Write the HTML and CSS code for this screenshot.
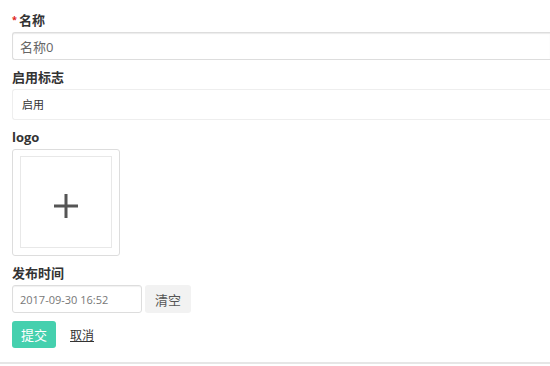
FILE: index.html
```html
<!DOCTYPE html>
<html lang="zh-CN">
<head>
    <meta charset="UTF-8">
    <meta name="viewport" content="width=device-width, initial-scale=1.0">
    <title>编辑</title>
    <link rel="stylesheet" href="styles.css">
</head>
<body>
    <form class="edit-form">
        <!-- 名称 -->
        <div class="field">
            <label class="field-label required">名称</label>
            <input type="text" class="text-input" value="名称0">
        </div>

        <!-- 启用标志 -->
        <div class="field">
            <label class="field-label">启用标志</label>
            <div class="select-box">启用</div>
        </div>

        <!-- logo -->
        <div class="field">
            <label class="field-label">logo</label>
            <div class="upload-box">
                <div class="upload-inner">
                    <svg width="26" height="26" viewBox="0 0 26 26">
                        <path d="M13 1v24M1 13h24" stroke="#555" stroke-width="3" fill="none"/>
                    </svg>
                </div>
            </div>
        </div>

        <!-- 发布时间 -->
        <div class="field">
            <label class="field-label">发布时间</label>
            <div class="date-row">
                <input type="text" class="date-input" value="2017-09-30 16:52">
                <button type="button" class="btn-clear">清空</button>
            </div>
        </div>

        <div class="actions">
            <button type="button" class="btn-submit">提交</button>
            <a href="#" class="link-cancel">取消</a>
        </div>
    </form>
</body>
</html>
```

FILE: styles.css
```css
body {
    margin: 0;
    padding: 0;
    background: #fff;
    color: #333;
    font-family: "Open Sans", "Noto Sans CJK SC", sans-serif;
}

.edit-form {
    width: 100%;
    padding: 11px 0 14px 12px;
    border-bottom: 2px solid #e6e6e6;
    box-sizing: border-box;
}

.field {
    margin-bottom: 8px;
}

.field-label {
    display: block;
    height: 18px;
    line-height: 18px;
    margin-bottom: 3px;
    font-size: 13px;
    font-weight: bold;
    color: #333;
}

.required::before {
    content: "*";
    color: #e02020;
    font-size: 9px;
    vertical-align: 2px;
    margin-right: 2px;
}

.text-input {
    display: block;
    width: 100%;
    height: 28px;
    padding: 0 7px;
    border: 1px solid #ddd;
    border-right: none;
    border-radius: 3px 0 0 3px;
    box-shadow: inset 0 1px 1px rgba(0, 0, 0, 0.08);
    font-family: inherit;
    font-size: 13px;
    color: #666;
    box-sizing: border-box;
    outline: none;
}

.select-box {
    height: 31px;
    line-height: 29px;
    padding: 0 9px;
    border: 1px solid #eee;
    border-right: none;
    border-radius: 3px 0 0 3px;
    font-size: 11px;
    color: #333;
    box-sizing: border-box;
}

.upload-box {
    width: 108px;
    height: 107px;
    padding: 6px 7px;
    border: 1px solid #ddd;
    border-radius: 3px;
    box-sizing: border-box;
}

.upload-inner {
    width: 92px;
    height: 92px;
    padding-top: 8px;
    border: 1px solid #e8e8e8;
    box-sizing: border-box;
    display: flex;
    align-items: center;
    justify-content: center;
}

.date-row {
    display: flex;
    gap: 3px;
}

.date-input {
    width: 130px;
    height: 28px;
    padding: 0 7px;
    border: 1px solid #ddd;
    border-radius: 3px;
    box-shadow: inset 0 1px 1px rgba(0, 0, 0, 0.06);
    font-family: inherit;
    font-size: 11px;
    color: #777;
    box-sizing: border-box;
    outline: none;
}

.btn-clear {
    height: 28px;
    padding: 0 10px;
    border: none;
    border-radius: 3px;
    background: #f2f2f2;
    font-family: inherit;
    font-size: 13px;
    color: #555;
}

.actions {
    display: flex;
    align-items: center;
    gap: 14px;
}

.btn-submit {
    height: 27px;
    padding: 0 9px;
    border: none;
    border-radius: 3px;
    background: #45d0ae;
    color: #fff;
    font-family: inherit;
    font-size: 13px;
}

.link-cancel {
    color: #333;
    font-size: 12px;
    text-decoration: underline;
}
```
